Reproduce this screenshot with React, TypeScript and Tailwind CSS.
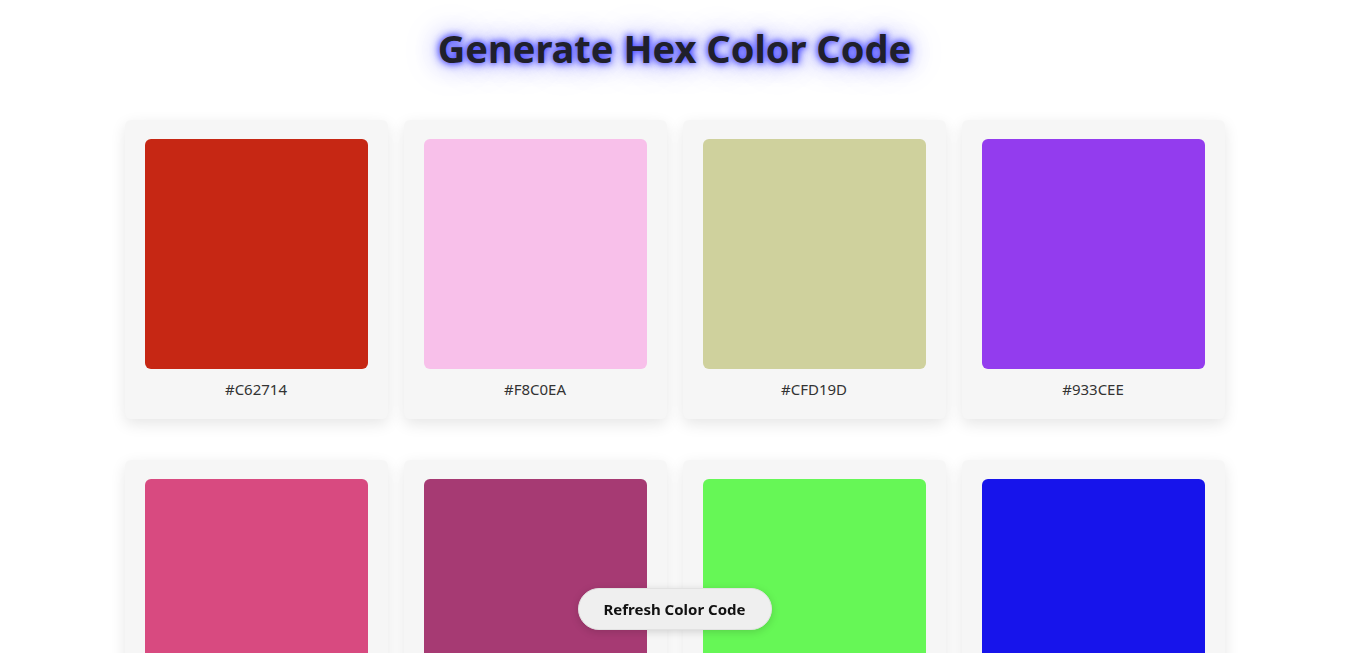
import React from "react";

const colors = [
  "#C62714",
  "#F8C0EA",
  "#CFD19D",
  "#933CEE",
  "#D84A80",
  "#A63A73",
  "#66F756",
  "#1714EB",
];

export default function App() {
  return (
    <div className="min-h-screen bg-white font-['Noto_Sans','Open_Sans',sans-serif] text-[#222]">
      <h1 className="pt-[23px] text-center text-[38px] font-bold leading-[50px] text-[#20202c] [text-shadow:0_0_6px_#4a4aff,0_0_10px_#5c5cff,0_0_24px_#8d8dff,0_0_44px_#c8c8ff]">
        Generate Hex Color Code
      </h1>
      <div className="mx-auto mt-[47px] grid w-[1100px] grid-cols-4 gap-x-[16px] gap-y-[41px] pb-[120px]">
        {colors.map((c) => (
          <div
            key={c}
            className="rounded-[6px] bg-[#f6f6f6] px-[20px] pt-[19px] pb-[19px] shadow-[0_5px_15px_rgba(0,0,0,0.1)]"
          >
            <div className="h-[230px] w-full rounded-[6px]" style={{ backgroundColor: c }} />
            <p className="mt-[10px] text-center text-[15px] leading-[21px] text-[#333]">{c}</p>
          </div>
        ))}
      </div>
      <button className="fixed bottom-[23px] left-1/2 h-[42px] w-[194px] -translate-x-1/2 rounded-full border border-[#e2e2e2] bg-[#efefef] text-[15px] font-bold text-[#111] shadow-[0_2px_8px_rgba(0,0,0,0.15)]">
        Refresh Color Code
      </button>
    </div>
  );
}
